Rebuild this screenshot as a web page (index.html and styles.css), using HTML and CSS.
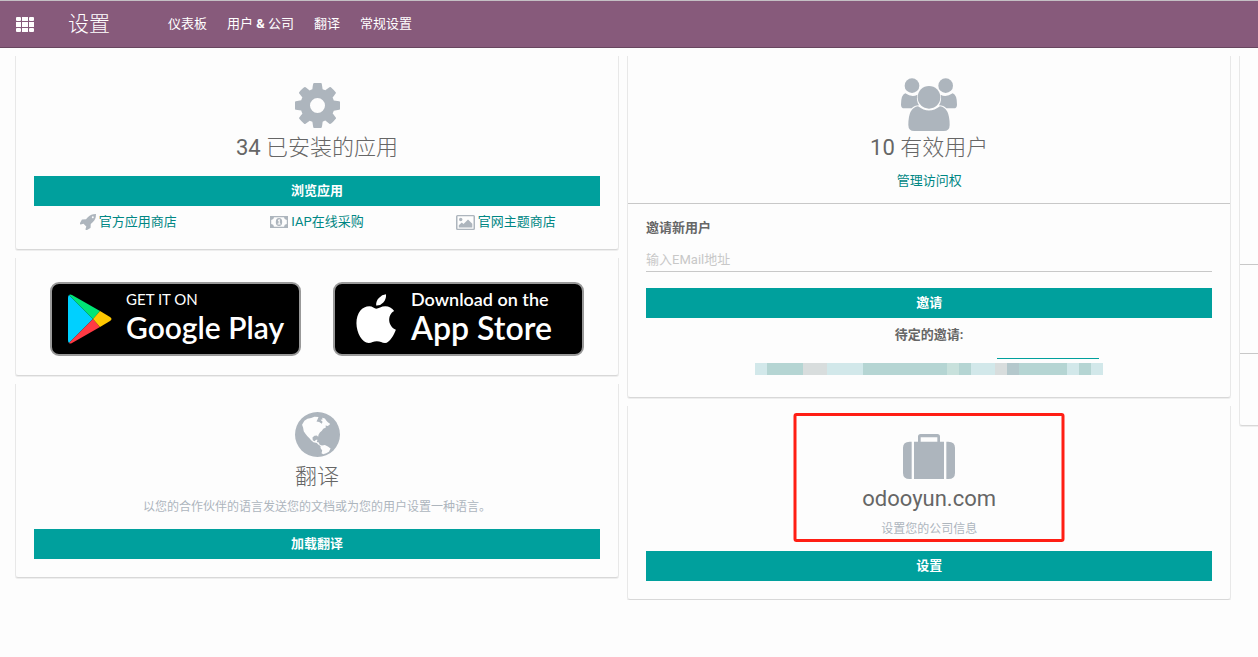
FILE: index.html
```html
<!DOCTYPE html>
<html lang="zh-CN">
<head>
<meta charset="utf-8">
<title>设置</title>
<link rel="stylesheet" href="styles.css">
</head>
<body>
<header class="navbar">
  <button class="apps-toggle" type="button" aria-label="应用">
    <svg width="18" height="15" viewBox="0 0 18 15" fill="currentColor"><rect width="5" height="4" rx="1"/><rect x="6" width="6" height="4"/><rect x="13" width="5" height="4" rx="1"/><rect y="5" width="5" height="5"/><rect x="6" y="5" width="6" height="5"/><rect x="13" y="5" width="5" height="5"/><rect y="11" width="5" height="4" rx="1"/><rect x="6" y="11" width="6" height="4"/><rect x="13" y="11" width="5" height="4" rx="1"/></svg>
  </button>
  <a class="brand" href="#">设置</a>
  <nav class="menu">
    <a href="#">仪表板</a>
    <a href="#">用户 <b>&amp;</b> 公司</a>
    <a href="#">翻译</a>
    <a href="#">常规设置</a>
  </nav>
</header>

<main class="dashboard">
  <div class="column">
    <section class="card card-apps">
      <svg class="icon" width="45" height="45" viewBox="128 128 1536 1536"><path d="M1152 896q0-106-75-181t-181-75-181 75-75 181 75 181 181 75 181-75 75-181zm512-109v222q0 12-8 23t-20 13l-185 28q-19 54-39 91 35 50 107 138 10 12 10 25t-9 23q-27 37-99 108t-94 71q-12 0-26-9l-138-108q-44 23-91 38-16 136-29 186-7 28-36 28h-222q-14 0-24.5-8.500t-11.500-21.500l-28-184q-49-16-90-37l-141 107q-10 9-25 9-14 0-25-11-126-114-165-168-7-10-7-23 0-12 8-23 15-21 51-66.500t54-70.500q-27-50-41-99l-183-27q-13-2-21-12.500t-8-23.500v-222q0-12 8-23t19-13l186-28q14-46 39-92-40-57-107-138-10-12-10-24 0-10 9-23 26-36 98.500-107.500t94.500-71.500q13 0 26 10l138 107q44-23 91-38 16-136 29-186 7-28 36-28h222q14 0 24.500 8.500t11.500 21.500l28 184q49 16 90 37l142-107q9-9 24-9 13 0 25 10 129 119 165 170 7 8 7 22 0 12-8 23-15 21-51 66.500t-54 70.500q26 50 41 98l183 28q13 2 21 12.500t8 23.500z"/></svg>
      <h2 class="title"><span class="latin">34</span> 已安装的应用</h2>
      <button class="btn" type="button">浏览应用</button>
      <div class="links">
        <a href="#"><svg class="icon" width="16" height="16" viewBox="64 128 1600 1600"><path d="M1440 448q0-40-28-68t-68-28-68 28-28 68 28 68 68 28 68-28 28-68zm224-288q0 249-75.500 430.500t-253.500 360.500q-81 80-195 176l-20 379q-2 16-16 26l-384 224q-7 4-16 4-12 0-23-9l-64-64q-13-14-8-32l85-276-281-281-276 85q-3 1-9 1-14 0-23-9l-64-64q-17-19-5-39l224-384q10-14 26-16l379-20q96-114 176-195 188-187 358-258t431-71q14 0 24 9.500t10 22.500z"/></svg>官方应用商店</a>
        <a href="#"><svg class="icon" width="18" height="12" viewBox="0 0 18 12"><path fill-rule="evenodd" d="M0 0h18v12H0zM4 1.200A3 3 0 0 1 1.200 4v4A3 3 0 0 1 4 10.800h10A3 3 0 0 1 16.800 8V4A3 3 0 0 1 14 1.200z"/><ellipse cx="9" cy="6" rx="3.200" ry="4"/><path fill="#fdfdfd" d="M8 4l1-.8h.8v4.300h.8v1H7.600v-1h1V4.700L8 5z"/></svg>IAP在线采购</a>
        <a href="#"><svg class="icon" width="19" height="15" viewBox="0 0 19 15"><path fill-rule="evenodd" d="M1.500 0h16Q19 0 19 1.500v12q0 1.500-1.500 1.500h-16Q0 15 0 13.500v-12Q0 0 1.500 0zm0 1.200v12.600h16V1.200z"/><circle cx="4.700" cy="4.500" r="1.700"/><path d="M2.800 12.500v-2.300l3-2.800 1.700 1.600 4.500-4.600 4.300 4.300v3.800z"/></svg>官网主题商店</a>
      </div>
    </section>

    <section class="card card-stores">
      <a class="badge badge-google" href="#">
        <svg width="44" height="50" viewBox="0 0 44 50"><path fill="#00d0ff" d="M1 1Q0 2 0 4v42q0 2 1 3l24-24z"/><path fill="#00e676" d="M1 1q1-1 3 0l28 16-7 8z"/><path fill="#ff3a44" d="M1 49q1 1 3 0l28-16-7-8z"/><path fill="#ffc800" d="M32 17l10 6q3 2 0 4l-10 6-7-8z"/></svg>
        <span class="badge-text"><small>GET IT ON</small><strong>Google Play</strong></span>
      </a>
      <a class="badge badge-apple" href="#">
        <svg width="40" height="50" viewBox="0 0 117 147" fill="#fff"><path d="M88 1q1 14-8 24-9 10-21 9-1-13 8-22Q76 2 88 1z"/><path d="M59 43c7 0 15-7 27-7 10 0 20 5 26 14-22 12-18 46 5 55-5 13-18 39-32 39-9 0-14-5-24-5s-15 5-24 5C18 144 1 114 1 86c0-31 17-50 38-50 9 0 15 7 20 7z"/></svg>
        <span class="badge-text"><small>Download on the</small><strong>App Store</strong></span>
      </a>
    </section>

    <section class="card card-info">
      <svg class="icon" width="45" height="45" viewBox="8 8 134 134"><circle cx="75" cy="75" r="67"/><path fill="#fdfdfd" d="M29 46L36 34 45 28 56 26 66 22 78 23 75 30 72 36 80 38 88 43 90 37 84 31 90 30 89 25 97 27 101 33 105 38 113 44 106 50 99 48 100 54 92 58 88 64 82 69 78 76 77 82 73 78 66 79 60 84 61 92 66 95 71 91 75 91 73 97 79 99 81 105 88 108 97 106 106 111 114 117 109 126 101 131 92 134 87 131 89 123 84 115 84 109 77 105 73 100 63 98 56 92 51 86 45 80 39 73 34 65 32 54z"/></svg>
      <h2 class="title">翻译</h2>
      <p class="desc">以您的合作伙伴的语言发送您的文档或为您的用户设置一种语言。</p>
      <button class="btn" type="button">加载翻译</button>
    </section>
  </div>

  <div class="column">
    <section class="card card-users">
      <div class="users-summary">
        <svg class="icon" width="56" height="54" viewBox="183 86 168 162"><circle cx="216" cy="109" r="22"/><circle cx="317" cy="109" r="22"/><path d="M196 132q20 13 36 4-4 18 5 32-14 0-22 9h-22q-10 0-10-11 0-30 13-34zM338 132q-20 13-36 4 4 18-5 32 14 0 22 9h22q10 0 10-11 0-30-13-34z"/><circle cx="267" cy="144" r="34"/><path d="M234 171q33 25 66 0 29 4 29 56 0 18-18 18h-88q-18 0-18-18 0-52 29-56z"/></svg>
        <h2 class="title title-tight"><span class="latin">10</span> 有效用户</h2>
        <a class="access" href="#">管理访问权</a>
      </div>
      <form class="invite">
        <label for="email">邀请新用户</label>
        <input id="email" type="text" placeholder="输入EMail地址">
        <button class="btn" type="button">邀请</button>
        <p class="pending">待定的邀请:</p>
        <div class="redacted"></div>
      </form>
    </section>

    <section class="card card-info">
      <div class="highlight"></div>
      <svg class="icon" width="52" height="45" viewBox="369 102 156 135"><path fill-rule="evenodd" d="M402 125h12v-15q0-8 8-8h50q8 0 8 8v15h12v112h-90zM422 125h50v-13h-50z"/><path d="M395 125v112h-6q-20 0-20-18v-76q0-18 20-18zM499 125v112h6q20 0 20-18v-76q0-18-20-18z"/></svg>
      <h2 class="title"><span class="latin">odooyun.com</span></h2>
      <p class="desc">设置您的公司信息</p>
      <button class="btn" type="button">设置</button>
    </section>
  </div>

  <div class="column">
    <section class="card card-more">
      <div class="more-top"></div>
      <div class="more-middle"></div>
      <div class="more-bottom"></div>
    </section>
  </div>
</main>
</body>
</html>
```
FILE: styles.css
```css
* { box-sizing: border-box; }

body {
  margin: 0;
  overflow-x: hidden;
  background: #fdfdfd;
  color: #666;
  font: 13px/24px Roboto, "Noto Sans CJK SC", sans-serif;
}

a { color: #008784; text-decoration: none; }
h2, p { margin: 0; }
button, input { font: inherit; }
svg { display: block; flex: none; }

.navbar {
  display: flex;
  align-items: center;
  height: 48px;
  padding-left: 16px;
  border-top: 1px solid #c4bfc4;
  border-bottom: 1px solid #68465f;
  background: #875a7b;
}
.navbar a { color: #fff; }
.apps-toggle { padding: 0; border: 0; background: none; color: #fff; }
.navbar .brand { margin: 0 58px 0 34px; font-size: 21px; font-weight: 300; }
.menu { display: flex; gap: 20px; }
.menu b { font-weight: 700; }

.dashboard {
  display: flex;
  gap: 8px;
  padding: 8px 0 0 15px;
  overflow: hidden;
}
.column {
  display: flex;
  flex: 0 0 48.6%;
  flex-direction: column;
  gap: 8px;
}
.card {
  position: relative;
  display: flex;
  flex-direction: column;
  align-items: center;
  padding: 0 18px;
  border: 1px solid #e8e8e8;
  border-top: 0;
  border-bottom-color: #d8d8d8;
  border-radius: 0 0 3px 3px;
  box-shadow: 0 1px 0 #eee;
}
.icon { fill: #adb5bd; }
.title { padding-top: 1px; font-size: 22px; font-weight: 300; line-height: 37px; }
.title-tight { line-height: 29px; }
.latin { font-weight: 400; }
.desc { color: #adb5bd; font-size: 12px; }
.btn {
  width: 100%;
  height: 30px;
  padding: 0;
  border: 0;
  background: #00a09d;
  color: #fff;
  font-weight: 700;
}

.card-apps { padding-top: 27px; padding-bottom: 12px; }
.card-apps .btn { margin-top: 10px; }
.links {
  display: grid;
  grid-template-columns: repeat(3, 1fr);
  width: 100%;
  padding-top: 1px;
}
.links a {
  display: flex;
  align-items: center;
  justify-content: center;
  gap: 3px;
  height: 30px;
}

.card-stores {
  flex-direction: row;
  justify-content: center;
  gap: 32px;
  padding-top: 24px;
  padding-bottom: 19px;
}
.badge {
  display: flex;
  align-items: center;
  width: 251px;
  height: 74px;
  border: 2px solid #999;
  border-radius: 9px;
  background: #000;
  color: #fff;
  font-family: Lato, sans-serif;
  white-space: nowrap;
}
.badge-google { gap: 14px; padding-left: 16px; }
.badge-apple { gap: 15px; padding-left: 21px; }
.badge-text { display: flex; flex-direction: column; padding-bottom: 4px; }
.badge small { font-size: 15px; line-height: 20px; }
.badge strong { font-size: 30px; font-weight: 600; line-height: 36px; }
.badge-apple small { font-size: 18px; font-weight: 600; line-height: 22px; }
.badge-apple strong { font-size: 32px; }

.card-info { padding-top: 28px; padding-bottom: 18px; }
.card-info .btn { margin-top: 10px; }
.highlight {
  position: absolute;
  top: 7px;
  left: 50%;
  width: 271px;
  height: 129px;
  border: 3px solid #ff1e14;
  border-radius: 3px;
  transform: translateX(-50%);
}

.card-users { align-items: stretch; padding: 0; }
.users-summary {
  display: flex;
  flex-direction: column;
  align-items: center;
  padding: 22px 18px 10px;
  border-bottom: 1px solid #c8c8c8;
}
.access { margin-top: 7px; }
.invite {
  display: flex;
  flex-direction: column;
  padding: 12px 18px 22px;
}
.invite label, .pending { font-weight: 700; }
.invite input {
  height: 24px;
  margin: 8px 0 16px;
  padding: 1px 0 0;
  border: 0;
  border-bottom: 1px solid #c8c8c8;
  background: none;
}
.invite input::placeholder { color: #c8c8c8; opacity: 1; }
.pending { margin-top: 5px; text-align: center; }
.redacted {
  align-self: center;
  width: 348px;
  height: 17px;
  margin-top: 11px;
  background:
    linear-gradient(#00a09d, #00a09d) 242px 0 / 102px 1px no-repeat,
    linear-gradient(90deg,
      #d2e8ea 0 12px, #b5d5d3 0 48px, #d8dddd 0 72px, #d2e8ea 0 108px,
      #b5d5d3 0 192px, #c8e1dc 0 204px, #b5d5d3 0 216px, #d2e8ea 0 240px,
      #d8dddd 0 252px, #b4c8cc 0 264px, #b5d5d3 0 312px, #d2e8ea 0 324px,
      #b5d5d3 0 336px, #d2e8ea 0) 0 5px / 348px 12px no-repeat;
}

.card-more { align-items: stretch; padding: 0; }
.more-top { height: 209px; border-bottom: 1px solid #c8c8c8; }
.more-middle { height: 89px; border-bottom: 1px solid #c8c8c8; }
.more-bottom { height: 71px; }
```
